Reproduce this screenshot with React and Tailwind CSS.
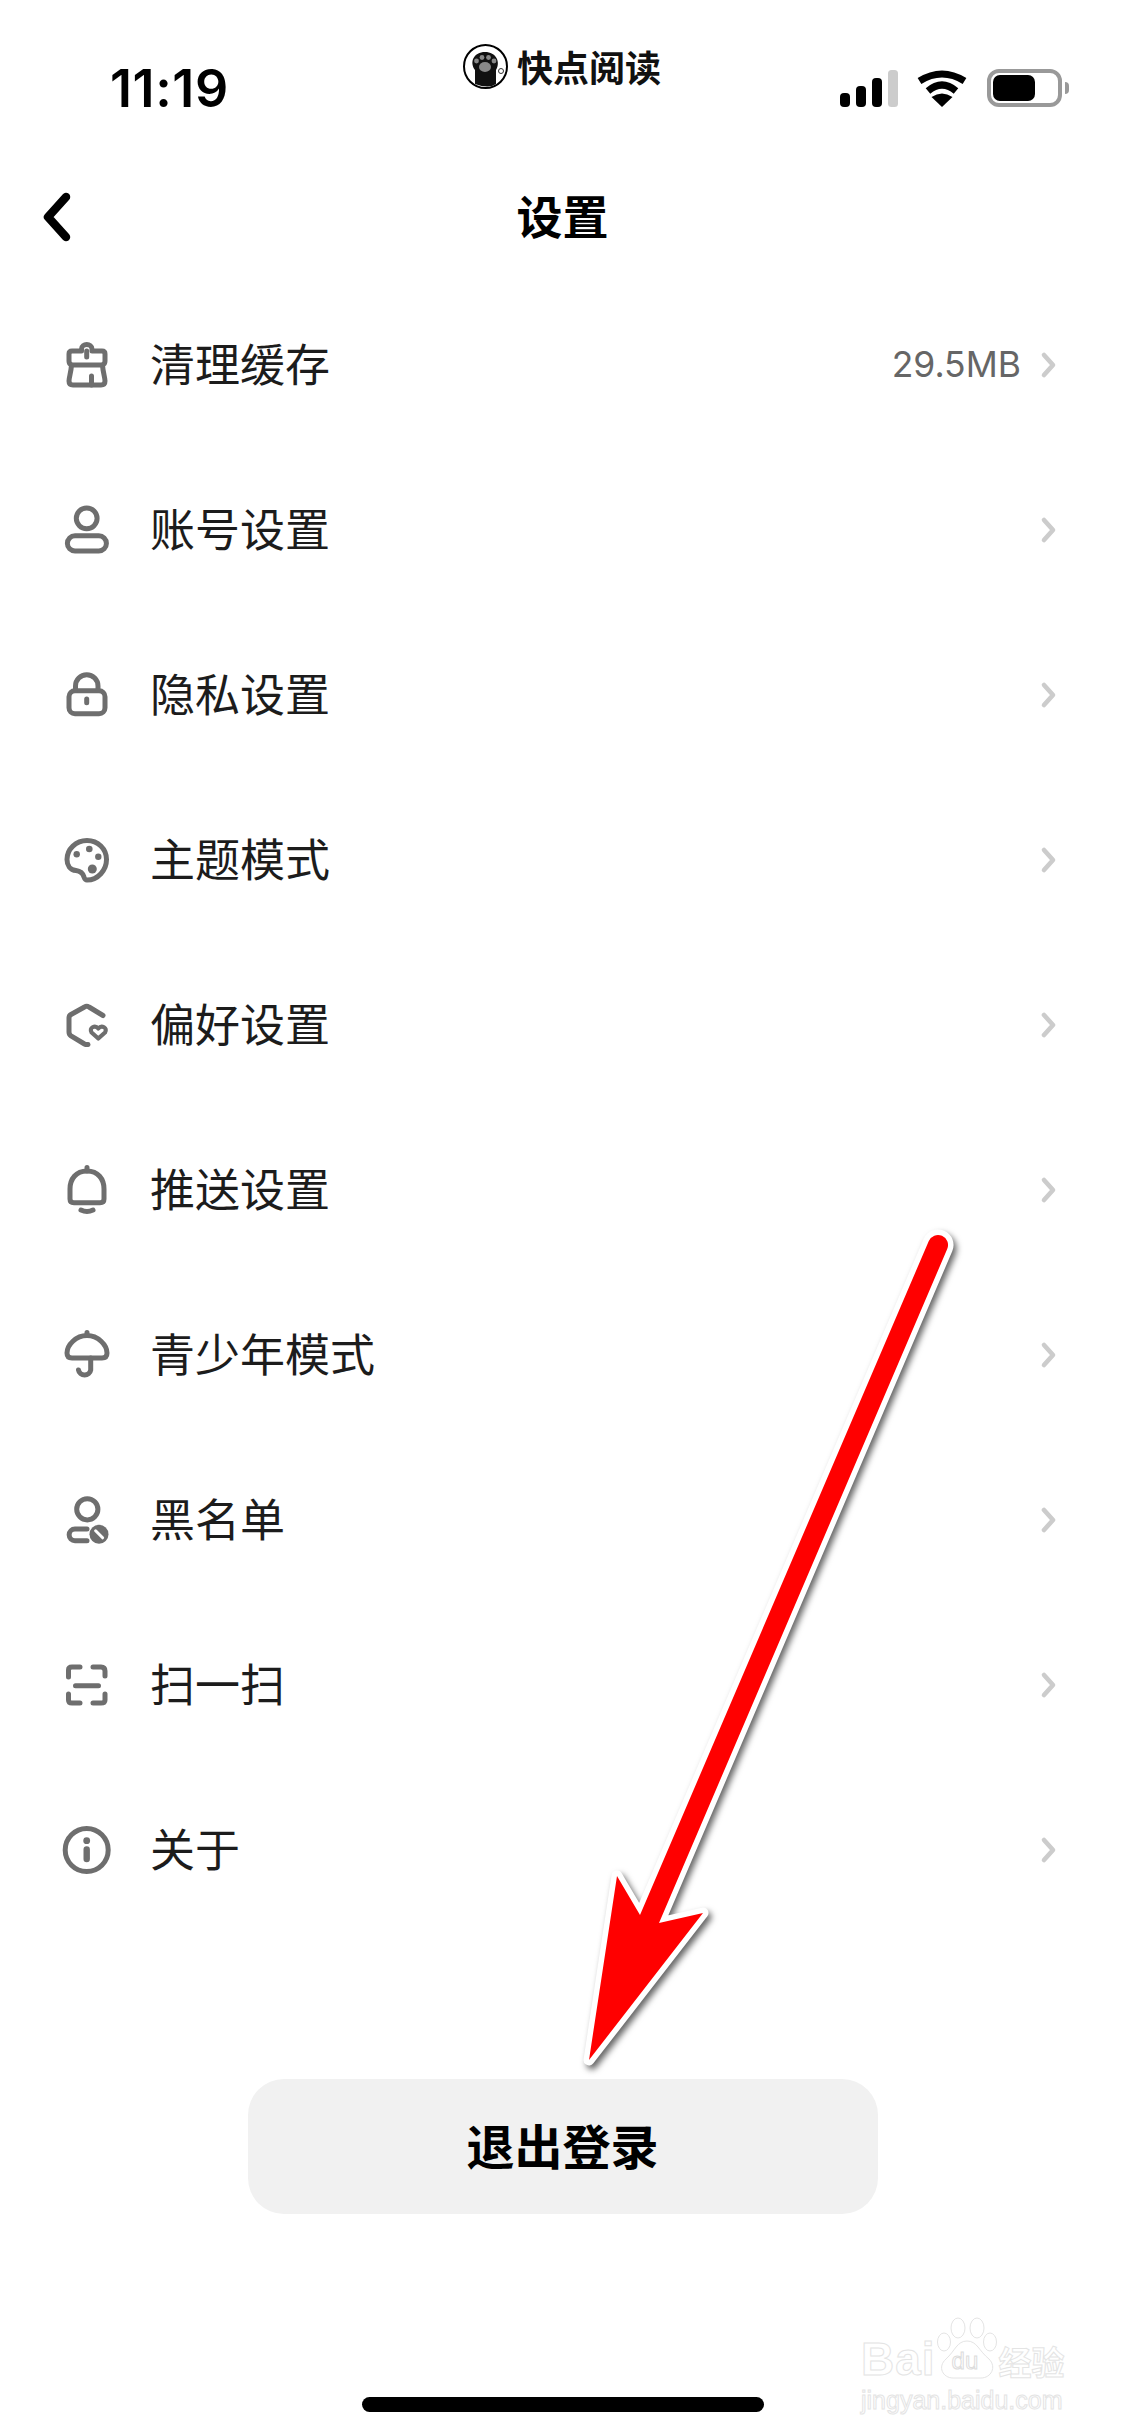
import React from 'react';

const cjk = 'font-["Noto_Sans_CJK_SC",sans-serif]';

function Icon({ children }) {
  return (
    <svg viewBox="0 0 48 48" fill="none" stroke="#6e6e6e" strokeWidth="5" strokeLinecap="round" strokeLinejoin="round" className="w-[48px] h-[48px] shrink-0 overflow-visible">
      {children}
    </svg>
  );
}

const BroomIcon = () => (
  <Icon>
    <path d="M18.5 10V8C18.5 2 29 2 29 8V10H39Q42 10 42 13V20Q42 23 39.5 24C40 32 42 36 42 40Q42 44 38 44H10Q6 44 6 40C6 36 8 32 8.5 24Q6 23 6 20V13Q6 10 9 10Z" />
    <path d="M8.5 24H39.5M23.7 10V16M28.5 44V35" />
  </Icon>
);
const UserIcon = () => (
  <Icon>
    <circle cx="23.7" cy="12.3" r="10.4" />
    <rect x="4.4" y="29.7" width="39" height="15.3" rx="7.6" />
  </Icon>
);
const LockIcon = () => (
  <Icon>
    <rect x="6" y="19.7" width="36" height="23" rx="6" />
    <path d="M12.5 19V15A11.2 11.2 0 0 1 35 15V19M23.7 28V31.7" />
  </Icon>
);
const PaletteIcon = () => (
  <Icon>
    <path d="M24 4.5C35 4.5 43.5 13 43.5 23.5C43.5 34 35 44 24 44C22 44 21.5 42.5 21 41C20 37.5 17 35 13 34.5C7 34 4 29 4 23.5C4 13 13 4.5 24 4.5Z" />
    <g fill="#6e6e6e" stroke="none">
      <circle cx="13.7" cy="18.3" r="3.2" />
      <circle cx="26.3" cy="13" r="3.3" />
      <circle cx="35.3" cy="20.7" r="3.2" />
      <circle cx="29.3" cy="33" r="4.5" />
    </g>
  </Icon>
);
const PreferIcon = () => (
  <Icon>
    <path d="M40 14.5L26 6Q23.7 4.5 21.5 6L8 13.5Q6 14.7 6 17V31Q6 33.5 8 34.8L21.5 43Q23 43.8 25 43.5" />
    <path d="M35.3 37.5L28.6 31.5C25.6 26.8 32 23.5 35.3 27.5C38.6 23.5 45 26.8 42 31.5Z" strokeWidth="4.2" />
  </Icon>
);
const BellIcon = () => (
  <Icon>
    <path d="M24 5C13 5 7 13 7 23V33Q7 36.7 11 36.7H37Q41 36.7 41 33V23C41 13 35 5 24 5Z" />
    <path d="M24 1.5V5M18 44Q24 47 30 44" />
  </Icon>
);
const UmbrellaIcon = () => (
  <Icon>
    <path d="M24 4.5C13 4.5 4 14 4 22Q4 27 9 27H39Q44 27 44 22C44 14 35 4.5 24 4.5Z" />
    <path d="M24 1.5V4.5M27.7 27V39A6.2 6.2 0 0 1 15.5 39" />
  </Icon>
);
const BlockUserIcon = () => (
  <Icon>
    <circle cx="24.3" cy="13.3" r="10.6" />
    <path d="M24 33H12A5.85 5.85 0 0 0 12 44.7H24" />
    <circle cx="36" cy="38.3" r="9.5" fill="#6e6e6e" stroke="none" />
    <path d="M32.6 34.8L39.6 41.8" stroke="#fff" strokeWidth="3" />
  </Icon>
);
const ScanIcon = () => (
  <Icon>
    <path d="M5.5 16V9Q5.5 6 9 6H17M30 6H38Q42 6 42 10V15M12.5 24.7H35.5M5.5 33V39Q5.5 42 9 42H17M42 33V39Q42 42 38 42H30" />
  </Icon>
);
const InfoIcon = () => (
  <Icon>
    <circle cx="23.7" cy="24" r="21.5" strokeWidth="5" />
    <circle cx="23.7" cy="14.7" r="3.4" fill="#6e6e6e" stroke="none" />
    <path d="M23.7 23.5V33" strokeWidth="6.4" />
  </Icon>
);

const rows = [
  { icon: BroomIcon, label: '清理缓存', value: '29.5MB' },
  { icon: UserIcon, label: '账号设置' },
  { icon: LockIcon, label: '隐私设置' },
  { icon: PaletteIcon, label: '主题模式' },
  { icon: PreferIcon, label: '偏好设置' },
  { icon: BellIcon, label: '推送设置' },
  { icon: UmbrellaIcon, label: '青少年模式' },
  { icon: BlockUserIcon, label: '黑名单' },
  { icon: ScanIcon, label: '扫一扫' },
  { icon: InfoIcon, label: '关于' },
];

function StatusIcons() {
  return (
    <div className="flex items-start">
      {/* signal */}
      <svg viewBox="0 0 58 38" className="w-[58px] h-[38px] mt-[1px]">
        <rect x="0" y="23" width="10" height="14" rx="4" fill="#000" />
        <rect x="16" y="16" width="10" height="21" rx="4" fill="#000" />
        <rect x="32" y="8" width="10" height="29" rx="4" fill="#000" />
        <rect x="48" y="0" width="10" height="37" rx="3.5" fill="#cccccc" />
      </svg>
      {/* wifi */}
      <svg viewBox="0 0 50 38" className="w-[50px] h-[38px] ml-[19px] mt-[1px]" fill="none" stroke="#000" strokeWidth="7">
        <path d="M2.5 11Q25 -3 47.5 11" />
        <path d="M11 21Q25 9 39 21" />
        <path d="M25 37L14.5 27Q25 20 35.5 27Z" fill="#000" stroke="none" />
      </svg>
      {/* battery */}
      <div className="flex items-center ml-[20px]">
        <div className="w-[75px] h-[38px] rounded-[12px] border-[4px] border-[#999999] p-[2px]">
          <div className="w-[42px] h-full rounded-[7px] bg-black" />
        </div>
        <div className="w-[4px] h-[12px] ml-[3px] rounded-r-full bg-[#999999]" />
      </div>
    </div>
  );
}

// logo of the screen recording app, sits over the status bar
function RecordingBadge() {
  return (
    <div className="absolute left-[463px] top-[44px] flex items-center">
      <svg viewBox="0 0 45 45" className="w-[45px] h-[45px]">
        <circle cx="22.5" cy="22.5" r="21.5" fill="#fff" stroke="#000" strokeWidth="2" />
        <path d="M12 44V26C6 18 11 8 22 8C33 8 38 18 33 26V40Q26 45 12 40Z" fill="#111" />
        <g fill="#888">
          <ellipse cx="22" cy="23" rx="6" ry="5" />
          <circle cx="13.5" cy="17" r="2.4" />
          <circle cx="19" cy="13.5" r="2.4" />
          <circle cx="25.5" cy="13.5" r="2.4" />
          <circle cx="31" cy="17" r="2.4" />
        </g>
        <circle cx="38" cy="27" r="2.5" fill="none" stroke="#333" strokeWidth="1" />
      </svg>
      <span className={`ml-[9px] text-[36px] leading-[45px] font-bold text-[#111] ${cjk}`}>快点阅读</span>
    </div>
  );
}

function Arrow() {
  return (
    <svg viewBox="0 0 1125 2436" className="absolute inset-0 w-[1125px] h-[2436px] pointer-events-none drop-shadow-[3px_4px_3px_rgba(0,0,0,0.6)]">
      <path
        d="M928.8 1241A10 10 0 0 1 947.2 1249L659 1923L703 1913L589 2060L617 1876L640 1915Z"
        fill="#ff0000"
        stroke="#ffffff"
        strokeWidth="11"
        strokeLinejoin="round"
        paintOrder="stroke"
      />
    </svg>
  );
}

function Watermark() {
  const outline = 'text-white [-webkit-text-stroke:1px_#e4e4e4]';
  return (
    <div className='absolute left-[861px] top-[2316px] w-[204px] font-["Liberation_Sans",sans-serif]'>
      <div className="flex items-end h-[63px] whitespace-nowrap">
        <span className={`text-[46px] leading-[40px] font-bold tracking-[1px] ${outline}`}>Bai</span>
        <div className="relative w-[61px] h-[62px] ml-[1px] shrink-0">
          <svg viewBox="0 0 61 62" className="w-[61px] h-[62px]" fill="#fff" stroke="#e4e4e4" strokeWidth="1">
            <ellipse cx="21" cy="11" rx="7" ry="10" />
            <ellipse cx="40" cy="11" rx="7" ry="10" />
            <ellipse cx="7" cy="25" rx="6.5" ry="9" />
            <ellipse cx="53" cy="25" rx="6.5" ry="9" />
            <path d="M30 24C40 24 42 34 52 42C60 50 54 61 44 61H16C6 61 0 50 9 42C18 34 20 24 30 24Z" />
          </svg>
          <span className="absolute left-[15px] bottom-[4px] text-[24px] leading-[28px] text-white [-webkit-text-stroke:1px_#dcdcdc]">du</span>
        </div>
        <span className={`ml-[1px] shrink-0 text-[33px] leading-[36px] font-bold ${outline} ${cjk}`}>经验</span>
      </div>
      <div className={`mt-[6px] text-[25px] leading-[30px] whitespace-nowrap ${outline}`}>jingyan.baidu.com</div>
    </div>
  );
}

export default function App() {
  return (
    <div className="relative w-[1125px] h-[2436px] overflow-hidden bg-white flex flex-col">
      {/* status bar */}
      <div className="h-[152px] shrink-0 flex items-start justify-between pl-[110px] pr-[56px] pt-[69px]">
        <span className='text-[52px] leading-[40px] font-semibold tracking-[0.6px] text-black font-["Inter",sans-serif]'>11:19</span>
        <StatusIcons />
      </div>

      {/* nav */}
      <div className="h-[130px] shrink-0 grid grid-cols-[1fr_auto_1fr] items-center">
        <svg viewBox="0 0 36 56" className="w-[36px] h-[56px] ml-[39px]" fill="none" stroke="#000" strokeWidth="8.5" strokeLinecap="round" strokeLinejoin="round">
          <path d="M27 8L9 28L27 48" />
        </svg>
        <span className={`pb-[6px] text-[46px] leading-[60px] font-bold text-black ${cjk}`}>设置</span>
        <div />
      </div>

      {/* settings list */}
      <div className="flex flex-col shrink-0">
        {rows.map(({ icon: RowIcon, label, value }) => (
          <div key={label} className="h-[165px] flex items-center pl-[63px] pr-[67px]">
            <RowIcon />
            <span className={`ml-[39px] pb-[4px] text-[45px] leading-[60px] text-[#1c1c1c] ${cjk}`}>{label}</span>
            {value && <span className='ml-auto text-[35.5px] leading-[44px] text-[#666666] font-["Inter",sans-serif]'>{value}</span>}
            <svg viewBox="0 0 20 28" className={`w-[20px] h-[28px] ${value ? 'ml-[17px]' : 'ml-auto'}`} fill="none" stroke="#cccccc" strokeWidth="4.6" strokeLinecap="round" strokeLinejoin="round">
              <path d="M6 4L15 14L6 24" />
            </svg>
          </div>
        ))}
      </div>

      {/* logout */}
      <button className="mt-[147px] mx-auto w-[630px] h-[135px] shrink-0 rounded-[36px] bg-[#f1f1f1] flex items-center justify-center">
        <span className={`pb-[5px] text-[48px] leading-[60px] font-bold text-black ${cjk}`}>退出登录</span>
      </button>

      {/* home indicator */}
      <div className="mt-[183px] mx-auto w-[402px] h-[15px] shrink-0 rounded-full bg-black" />

      <RecordingBadge />
      <Arrow />
      <Watermark />
    </div>
  );
}
